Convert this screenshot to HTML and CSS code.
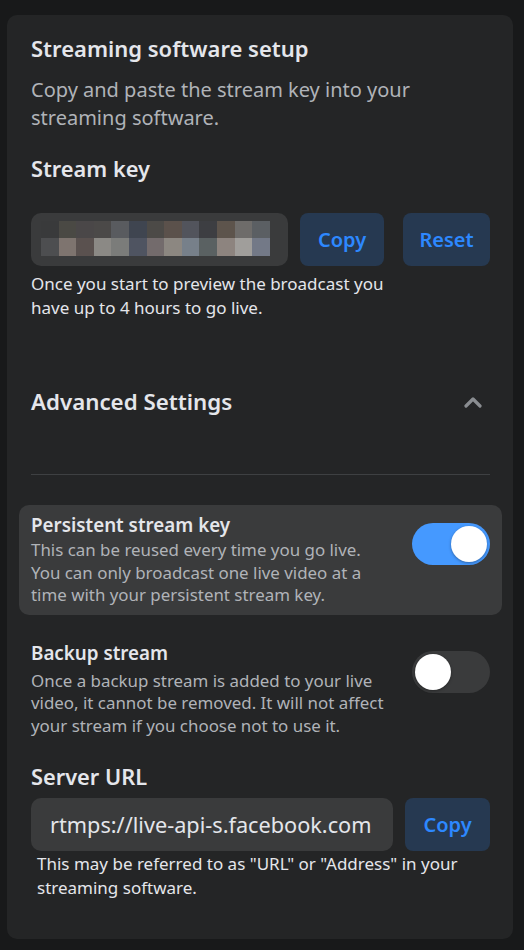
FILE: index.html
```html
<!DOCTYPE html>
<html lang="en">
<head>
<meta charset="utf-8">
<title>Streaming software setup</title>
<link rel="stylesheet" href="styles.css">
</head>
<body>
<div class="card">
  <h1 class="title">Streaming software setup</h1>
  <p class="sub">Copy and paste the stream key into your streaming software.</p>

  <h2 class="heading key-heading">Stream key</h2>
  <div class="key-row">
    <div class="key-box">
      <div class="pixels">
        <span style="background:#393a3b"></span><span style="background:#4a4944"></span><span style="background:#4a4748"></span><span style="background:#4b4948"></span><span style="background:#595b5f"></span><span style="background:#3f4550"></span><span style="background:#4c4a47"></span><span style="background:#5b514b"></span><span style="background:#52545c"></span><span style="background:#3d3e42"></span><span style="background:#5d544c"></span><span style="background:#6e6c6a"></span><span style="background:#5b5f63"></span>
        <span style="background:#4d4e50"></span><span style="background:#7e746f"></span><span style="background:#5a514f"></span><span style="background:#8b8985"></span><span style="background:#7b7c7a"></span><span style="background:#4f5461"></span><span style="background:#736b6c"></span><span style="background:#8c8781"></span><span style="background:#77808a"></span><span style="background:#5a6162"></span><span style="background:#8d847f"></span><span style="background:#a09e9b"></span><span style="background:#737987"></span>
      </div>
    </div>
    <button class="btn btn-copy">Copy</button>
    <button class="btn btn-reset">Reset</button>
  </div>
  <p class="note">Once you start to preview the broadcast you have up to 4 hours to go live.</p>

  <div class="adv-row">
    <h2 class="heading adv">Advanced Settings</h2>
    <svg class="chev" width="20" height="12" viewBox="0 0 20 12"><path d="M3 10 L10 3 L17 10" fill="none" stroke="#8a8d91" stroke-width="3.2" stroke-linecap="round" stroke-linejoin="round"/></svg>
  </div>
  <div class="divider"></div>

  <div class="setting active">
    <div class="setting-text">
      <div class="setting-title">Persistent stream key</div>
      <div class="setting-desc">This can be reused every time you go live. You can only broadcast one live video at a time with your persistent stream key.</div>
    </div>
    <div class="toggle on"><div class="knob"></div></div>
  </div>

  <div class="setting">
    <div class="setting-text">
      <div class="setting-title">Backup stream</div>
      <div class="setting-desc">Once a backup stream is added to your live video, it cannot be removed. It will not affect your stream if you choose not to use it.</div>
    </div>
    <div class="toggle"><div class="knob"></div></div>
  </div>

  <h2 class="heading url-heading">Server URL</h2>
  <div class="url-row">
    <div class="url-box">rtmps://live-api-s.facebook.com</div>
    <button class="btn btn-copy2">Copy</button>
  </div>
  <p class="note url-note">This may be referred to as "URL" or "Address" in your streaming software.</p>
</div>
</body>
</html>
```
FILE: styles.css
```css
html, body {
  margin: 0;
  padding: 0;
  background: #18191a;
}
body {
  font-family: "Noto Sans", "Open Sans", sans-serif;
  color: #e4e6eb;
  padding: 15px 11px 11px 7px;
}
.card {
  background: #242526;
  border-radius: 10px;
  padding: 20px 23px 38px 24px;
  height: 924px;
  box-sizing: border-box;
}
.title {
  margin: 0;
  font-size: 22px;
  line-height: 26px;
  font-weight: 600;
  color: #e4e6eb;
}
.sub {
  margin: 15px 0 0;
  font-size: 20px;
  line-height: 28px;
  color: #b0b3b8;
  max-width: 410px;
}
.heading {
  margin: 0;
  font-size: 21.8px;
  line-height: 26px;
  font-weight: 600;
  color: #e4e6eb;
}
.key-heading {
  margin-top: 24px;
}
.key-row {
  display: flex;
  margin-top: 31px;
  height: 53px;
}
.key-box {
  width: 257px;
  background: #3a3b3c;
  border-radius: 10px;
  padding: 8px 0 0 10px;
  box-sizing: border-box;
}
.pixels {
  display: grid;
  grid-template-columns: repeat(13, 17.6px);
  grid-template-rows: 17px 18px;
}
.btn {
  border: none;
  background: #263951;
  color: #2d88ff;
  font-family: inherit;
  font-size: 20px;
  font-weight: 600;
  border-radius: 8px;
  padding: 0;
  height: 53px;
}
.btn-copy {
  width: 84px;
  margin-left: 12px;
}
.btn-reset {
  width: 87px;
  margin-left: 19px;
}
.note {
  margin: 6px 0 0;
  font-size: 17px;
  line-height: 24px;
  color: #e4e6eb;
  max-width: 370px;
}
.adv-row {
  display: flex;
  justify-content: space-between;
  align-items: center;
  margin-top: 69px;
  padding-right: 7px;
}
.adv {
  font-size: 22.3px;
}
.chev {
  display: block;
}
.divider {
  height: 1px;
  background: #3e4042;
  margin-top: 59px;
}
.setting {
  display: flex;
  justify-content: space-between;
  align-items: flex-start;
  margin: 0 -12px;
  padding: 8px 12px 8px;
  border-radius: 10px;
}
.setting.active {
  background: #3a3b3c;
  margin-top: 30px;
}
.setting + .setting {
  margin-top: 18px;
}
.setting-text {
  max-width: 362px;
}
.setting.active .setting-text {
  max-width: 345px;
}
.setting-title {
  font-size: 18.8px;
  line-height: 24px;
  font-weight: 600;
  color: #e4e6eb;
}
.setting-desc {
  margin-top: 2px;
  font-size: 16.9px;
  line-height: 22.5px;
  color: #b0b3b8;
}
.setting + .setting .setting-desc {
  margin-top: 5px;
}
.toggle {
  flex: none;
  width: 78px;
  height: 42px;
  border-radius: 21px;
  background: #3a3b3c;
  position: relative;
  margin-top: 10px;
}
.toggle.on {
  background: #4599ff;
}
.knob {
  position: absolute;
  top: 3px;
  left: 3px;
  width: 36px;
  height: 36px;
  border-radius: 50%;
  background: #ffffff;
  box-shadow: 0 1px 3px rgba(0,0,0,0.35);
}
.toggle.on .knob {
  left: 39px;
}
.url-heading {
  margin-top: 19px;
}
.url-row {
  display: flex;
  margin-top: 8px;
  height: 53px;
}
.url-box {
  width: 362px;
  background: #3a3b3c;
  border-radius: 10px;
  padding: 0 0 0 19px;
  box-sizing: border-box;
  font-size: 21.7px;
  line-height: 53px;
  white-space: nowrap;
  overflow: hidden;
  color: #e4e6eb;
}
.btn-copy2 {
  width: 85px;
  margin-left: 12px;
}
.url-note {
  margin: 1px 0 0 6px;
  max-width: 430px;
}
```
